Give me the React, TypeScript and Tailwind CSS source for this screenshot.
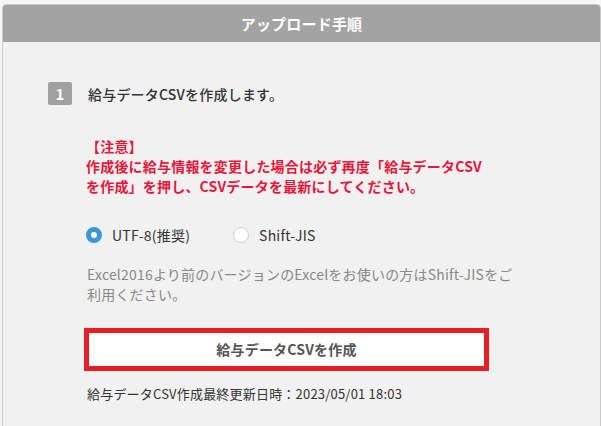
import React from "react";

const font = { fontFamily: '"Noto Sans CJK JP", "Noto Sans", sans-serif' };

export default function App() {
  return (
    <div
      className="w-[601px] h-[426px] overflow-hidden bg-[#f6f6f6] pt-[4px] pl-[2px] tracking-[0.2px]"
      style={font}
    >
      <div className="w-[599px] h-[430px] rounded-t-[4px] border border-[#c9c9c9] bg-[#f1f1f1] overflow-hidden">
        <div className="h-[37px] bg-[#a3a3a3] flex items-center justify-center text-white font-bold text-[15px] leading-none">
          アップロード手順
        </div>
        <div className="pl-[45px] pt-[40px]">
          <div className="flex items-center gap-[16px]">
            <div className="w-[24px] h-[23px] rounded-[2px] bg-[#a0a0a0] text-white font-bold text-[15px] flex items-center justify-center leading-none">
              1
            </div>
            <div className="text-[14px] font-medium text-[#333] leading-[20px]">
              給与データCSVを作成します。
            </div>
          </div>

          <div className="ml-[36px] w-[406px]">
            <div className="mt-[31px] pl-[2px] text-[14px] font-bold text-[#e8173c] leading-[20px] whitespace-nowrap">
              【注意】
              <br />
              作成後に給与情報を変更した場合は必ず再度「給与データCSV
              <br />
              を作成」を押し、CSVデータを最新にしてください。
            </div>

            <div className="mt-[29px] pl-[2px] flex items-center h-[20px] text-[14px] text-[#333]">
              <span className="w-[16px] h-[16px] rounded-full border-[5px] border-[#3a96dd] bg-white"></span>
              <span className="ml-[10px]">UTF-8(推奨)</span>
              <span className="ml-[43px] w-[16px] h-[16px] rounded-full border border-[#cfcfcf] bg-white"></span>
              <span className="ml-[10px]">Shift-JIS</span>
            </div>

            <div className="mt-[19px] pl-[3px] text-[14px] text-[#888] leading-[20px] whitespace-nowrap">
              Excel2016より前のバージョンのExcelをお使いの方はShift-JISをご
              <br />
              利用ください。
            </div>

            <div className="mt-[24px] w-[405px] h-[43px] border-[5px] border-[#e81e25] bg-white flex items-center justify-center text-[14px] font-bold text-[#555]">
              給与データCSVを作成
            </div>

            <div className="mt-[13px] pl-[3px] text-[13px] text-[#333] leading-[20px]">
              給与データCSV作成最終更新日時：2023/05/01 18:03
            </div>
          </div>
        </div>
      </div>
    </div>
  );
}
